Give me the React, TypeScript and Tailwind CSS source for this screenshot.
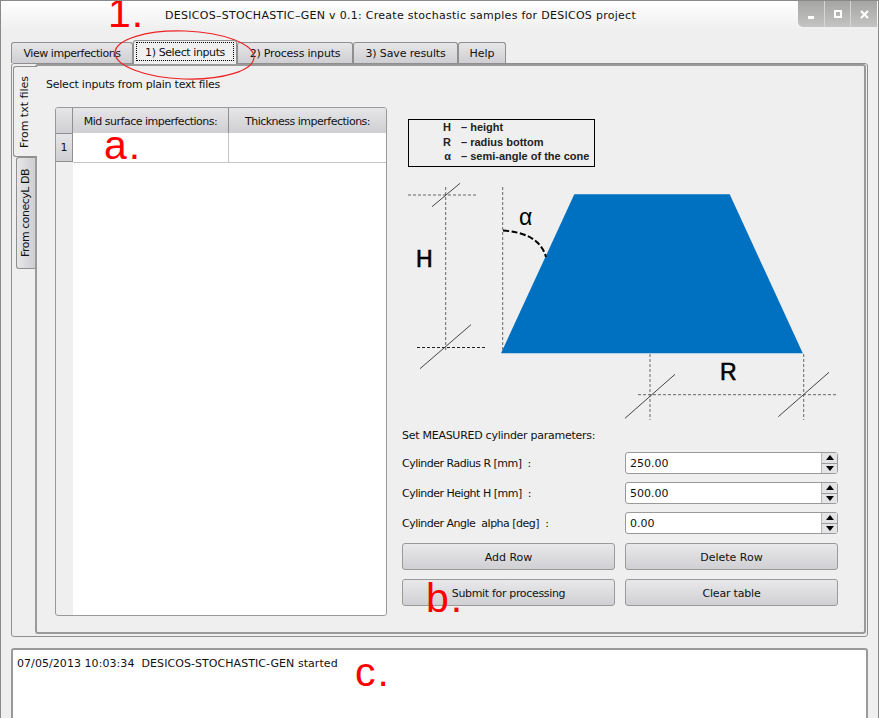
const tabs = [
  { label: 'View imperfections', w: 'w-[122px] tracking-[-0.45px]' },
  { label: '1) Select inputs', w: 'w-[104px] tracking-[-0.4px]', active: true },
  { label: '2) Process inputs', w: 'w-[116px] tracking-[-0.2px]' },
  { label: '3) Save results', w: 'w-[105px] tracking-[-0.13px]' },
  { label: 'Help', w: 'w-[48px]' },
]

const params = [
  { label: 'Cylinder Radius R [mm]  :', value: '250.00' },
  { label: 'Cylinder Height H [mm]  :', value: '500.00' },
  { label: 'Cylinder Angle  alpha [deg]  :', value: '0.00' },
]

function Tab({ label, w, active }: { label: string; w: string; active?: boolean }) {
  if (active) {
    return (
      <div className={`${w} z-10 -mb-px flex h-[24px] items-start justify-center whitespace-nowrap rounded-t-[3px] border border-b-0 border-[#8f8f8f] bg-[#efefef] pt-[1px]`}>
        <span className="h-[19px] w-[98px] border border-dotted border-black text-center leading-[19px]">{label}</span>
      </div>
    )
  }
  return (
    <div className={`${w} flex h-[21px] items-center justify-center whitespace-nowrap rounded-t-[3px] border border-b-0 border-[#8f8f8f] bg-gradient-to-b from-[#e6e6e8] to-[#cfcfd3] pt-[3px]`}>
      {label}
    </div>
  )
}

function Spinner({ value }: { value: string }) {
  return (
    <div className="flex h-[22px] w-[213px] rounded-[3px] border border-[#9a9a9a] bg-white">
      <div className="flex-1 pl-[4px] leading-[22px]">{value}</div>
      <div className="flex w-[16px] flex-col border-l border-[#b5b5b5] bg-[#e4e4e6]">
        <div className="flex flex-1 items-center justify-center border-b border-[#9a9a9a]">
          <div className="h-0 w-0 border-x-[4px] border-b-[5px] border-x-transparent border-b-black" />
        </div>
        <div className="flex flex-1 items-center justify-center">
          <div className="h-0 w-0 border-x-[4px] border-t-[5px] border-x-transparent border-t-black" />
        </div>
      </div>
    </div>
  )
}

function Btn({ label, cls }: { label: string; cls?: string }) {
  return (
    <div className={`flex h-[27px] w-[213px] items-center justify-center rounded-[3px] border border-[#9a9a9a] bg-gradient-to-b from-[#e9e9eb] to-[#d0d0d4] pt-[3px] ${cls ?? ''}`}>
      {label}
    </div>
  )
}

function Diagram() {
  return (
    <svg className="block" width="436" height="241" viewBox="402 180 436 241">
      <polygon points="574.3,194.3 729.7,194.3 802.8,353.3 501,353.3" fill="#0070c0" />
      <g stroke="#666" strokeWidth="1" strokeDasharray="3 2" fill="none">
        <line x1="408" y1="195" x2="478" y2="195" />
        <line x1="445.7" y1="187" x2="445.7" y2="352" />
        <line x1="417" y1="347.5" x2="487" y2="347.5" stroke="#222" />
        <line x1="502.7" y1="187" x2="502.7" y2="352" />
        <line x1="650" y1="354" x2="650" y2="420" />
        <line x1="803.7" y1="354" x2="803.7" y2="420" />
        <line x1="638" y1="394.7" x2="837" y2="394.7" />
      </g>
      <g stroke="#444" strokeWidth="1" fill="none">
        <line x1="432" y1="206.7" x2="460" y2="183.3" />
        <line x1="420" y1="368.7" x2="471" y2="324.7" />
        <line x1="625" y1="418.3" x2="675" y2="374.3" />
        <line x1="778.3" y1="416.7" x2="829" y2="372.3" />
      </g>
      <path d="M503 230.5 C524 232 541 239 546 257" fill="none" stroke="#000" strokeWidth="2" strokeDasharray="6 2.5" />
      <g fontFamily="'Liberation Sans', sans-serif" fontSize="23" fill="#000">
        <text x="416" y="267" stroke="#000" strokeWidth="0.6">H</text>
        <text x="720" y="380" stroke="#000" strokeWidth="0.6">R</text>
        <text x="519" y="225">α</text>
      </g>
    </svg>
  )
}

export default function App() {
  return (
    <div className="relative h-[718px] w-[879px] overflow-hidden border-x border-t border-[#8a8a8a] bg-[#efefef] font-['DejaVu_Sans',sans-serif] text-[11px] text-[#111]">
      {/* title bar */}
      <div className="flex h-[29px] items-center bg-gradient-to-b from-white to-[#efefef] pl-[164px] pt-[1px] tracking-[0.28px]">
        DESICOS–STOCHASTIC–GEN v 0.1: Create stochastic samples for DESICOS project
      </div>
      <div className="absolute right-[1px] top-0 flex h-[26px] w-[79px] rounded-bl-[5px] bg-gradient-to-b from-[#a5a5a3] to-[#c4c4c2] text-white">
        <div className="flex flex-1 items-end justify-center border-r border-[#d6d6d4] pb-[8px]">
          <div className="h-[3px] w-[6px] bg-white" />
        </div>
        <div className="flex flex-1 items-center justify-center border-r border-[#d6d6d4]">
          <div className="h-[8px] w-[8px] border-2 border-white" />
        </div>
        <div className="flex flex-1 items-center justify-center">
          <svg width="9" height="9" viewBox="0 0 9 9"><path d="M1 1l7 7M8 1l-7 7" stroke="#fff" strokeWidth="2.2" /></svg>
        </div>
      </div>

      {/* tabs */}
      <div className="flex h-[33px] items-end pl-[10px]">
        {tabs.map((t) => (
          <Tab key={t.label} {...t} />
        ))}
      </div>

      {/* main pane */}
      <div className="ml-[10px] flex h-[574px] w-[857px] rounded-[3px] border border-[#8f8f8f]">
        <div className="flex w-[23px] flex-col pl-[1px] pt-[2px]">
          <div className="z-10 -mr-[2px] flex h-[91px] items-center justify-center rounded-l-[3px] border border-r-0 border-[#8f8f8f] bg-[#efefef]">
            <span className="rotate-180 [writing-mode:vertical-rl]">From txt files</span>
          </div>
          <div className="ml-[3px] flex h-[112px] items-center justify-center rounded-l-[3px] border border-r-0 border-[#8f8f8f] bg-gradient-to-r from-[#e6e6e8] to-[#cfcfd3]">
            <span className="rotate-180 tracking-[-0.5px] [writing-mode:vertical-rl]">From conecyL DB</span>
          </div>
        </div>
        <div className="mb-[2px] mr-[1px] flex flex-1 rounded-[3px] border-2 border-[#9a9a9a]">
          <div className="ml-[9px] pt-[12px]">
            <div className="leading-[14px] tracking-[-0.23px]">Select inputs from plain text files</div>
            <div className="ml-[9px] mt-[15px] h-[509px] w-[332px] overflow-hidden rounded-[3px] border border-[#9a9a9a]">
              <div className="flex h-[25px] text-center leading-[27px] tracking-[-0.5px]">
                <div className="w-[17px] border-r border-[#8f8f8f] bg-gradient-to-b from-[#e6e6e8] to-[#cfcfd3]" />
                <div className="w-[156px] border-r border-[#8f8f8f] bg-gradient-to-b from-[#e6e6e8] to-[#cfcfd3]">Mid surface imperfections:</div>
                <div className="flex-1 bg-gradient-to-b from-[#e6e6e8] to-[#cfcfd3]">Thickness imperfections:</div>
              </div>
              <div className="flex h-[483px]">
                <div className="w-[17px]">
                  <div className="h-[29px] border-y border-r border-[#8f8f8f] bg-gradient-to-b from-[#e6e6e8] to-[#cfcfd3] text-center leading-[28px]">1</div>
                </div>
                <div className="flex-1 bg-white">
                  <div className="flex h-[30px] border-b border-[#c4c4c4]">
                    <div className="w-[156px] border-r border-[#c4c4c4]" />
                  </div>
                </div>
              </div>
            </div>
          </div>
          <div className="ml-[15px] pt-[53px]">
            <div className="ml-[6px] flex h-[48px] w-[187px] flex-col justify-center border border-black pb-[2px] font-['Liberation_Sans',sans-serif] text-[11px] font-bold leading-[14.5px] text-[#222]">
              <div className="flex"><span className="w-[42px] text-right">H</span><span className="ml-[10px]">– height</span></div>
              <div className="flex"><span className="w-[42px] text-right">R</span><span className="ml-[10px]">– radius bottom</span></div>
              <div className="flex"><span className="w-[42px] text-right">α</span><span className="ml-[10px]">– semi-angle of the cone</span></div>
            </div>
            <div className="mt-[13px]">
              <Diagram />
            </div>
            <div className="mt-[8px] leading-[14px] tracking-[-0.27px]">Set MEASURED cylinder parameters:</div>
            <div className="mt-[9px] flex flex-col gap-[8px]">
              {params.map((p) => (
                <div key={p.label} className="flex h-[22px] items-center justify-between whitespace-pre">
                  <span className="pt-[2px] tracking-[-0.5px]">{p.label}</span>
                  <Spinner value={p.value} />
                </div>
              ))}
            </div>
            <div className="mt-[9px] grid w-[436px] grid-cols-[213px_213px] gap-x-[10px] gap-y-[9px]">
              <Btn label="Add Row" />
              <Btn label="Delete Row" />
              <Btn label="Submit for processing" cls="tracking-[-0.33px]" />
              <Btn label="Clear table" cls="tracking-[-0.2px]" />
            </div>
          </div>
        </div>
      </div>

      {/* log */}
      <div className="ml-[10px] mt-[11px] h-[80px] w-[857px] whitespace-pre rounded-[3px] border-2 border-[#9a9a9a] bg-white pl-[4px] pt-[7px] leading-[14px] tracking-[0.06px]">
        07/05/2013 10:03:34  DESICOS-STOCHASTIC-GEN started
      </div>

      {/* red annotations drawn over the screenshot */}
      <svg className="absolute left-[-1px] top-[-1px]" width="300" height="100" fill="none">
        <ellipse cx="184.5" cy="55" rx="69.5" ry="24" stroke="#ee2222" strokeWidth="1.2" transform="rotate(2 184.5 55)" />
      </svg>
      <span className="absolute left-[107px] top-[-1px] font-['Liberation_Sans',sans-serif] text-[41px] leading-[27px] tracking-[1px] text-[#ff0000]">1.</span>
      <span className="absolute left-[103px] top-[131px] font-['Liberation_Sans',sans-serif] text-[41px] leading-[27px] tracking-[2px] text-[#ff0000]">a.</span>
      <span className="absolute left-[425px] top-[584px] font-['Liberation_Sans',sans-serif] text-[41px] leading-[27px] tracking-[2px] text-[#ff0000]">b.</span>
      <span className="absolute left-[354px] top-[658px] font-['Liberation_Sans',sans-serif] text-[41px] leading-[27px] tracking-[2px] text-[#ff0000]">c.</span>
    </div>
  )
}
